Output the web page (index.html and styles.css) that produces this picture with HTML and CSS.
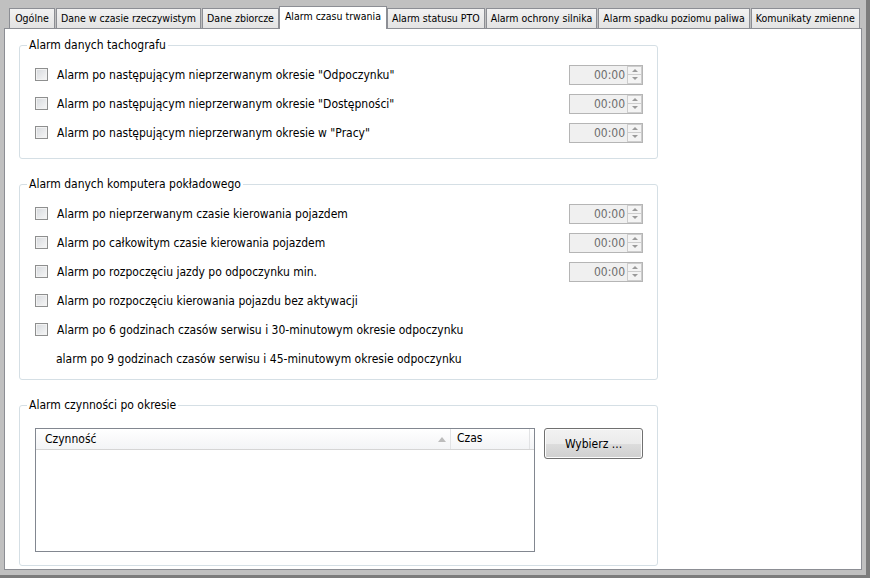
FILE: index.html
```
<!doctype html>
<html lang="pl">
  <head>
    <meta charset="UTF-8" />
    <title>Alarm czasu trwania</title>
    <link rel="stylesheet" href="styles.css">
  </head>
  <body>
    <div class="window">
      <div class="tabs">
        <div class="tab">Ogólne</div>
        <div class="tab">Dane w czasie rzeczywistym</div>
        <div class="tab">Dane zbiorcze</div>
        <div class="tab active">Alarm czasu trwania</div>
        <div class="tab">Alarm statusu PTO</div>
        <div class="tab">Alarm ochrony silnika</div>
        <div class="tab">Alarm spadku poziomu paliwa</div>
        <div class="tab">Komunikaty zmienne</div>
      </div>
      <div class="panel">
        <fieldset class="group">
          <legend>Alarm danych tachografu</legend>
          <div class="row">
            <span class="check"></span>
            <span class="label">Alarm po następującym nieprzerwanym okresie "Odpoczynku"</span>
            <div class="spin"><span class="spin-value">00:00</span><span class="spin-buttons"><i class="up"></i><i class="down"></i></span></div>
          </div>
          <div class="row">
            <span class="check"></span>
            <span class="label">Alarm po następującym nieprzerwanym okresie "Dostępności"</span>
            <div class="spin"><span class="spin-value">00:00</span><span class="spin-buttons"><i class="up"></i><i class="down"></i></span></div>
          </div>
          <div class="row">
            <span class="check"></span>
            <span class="label">Alarm po następującym nieprzerwanym okresie w "Pracy"</span>
            <div class="spin"><span class="spin-value">00:00</span><span class="spin-buttons"><i class="up"></i><i class="down"></i></span></div>
          </div>
        </fieldset>

        <fieldset class="group computer">
          <legend>Alarm danych komputera pokładowego</legend>
          <div class="row">
            <span class="check"></span>
            <span class="label">Alarm po nieprzerwanym czasie kierowania pojazdem</span>
            <div class="spin"><span class="spin-value">00:00</span><span class="spin-buttons"><i class="up"></i><i class="down"></i></span></div>
          </div>
          <div class="row">
            <span class="check"></span>
            <span class="label">Alarm po całkowitym czasie kierowania pojazdem</span>
            <div class="spin"><span class="spin-value">00:00</span><span class="spin-buttons"><i class="up"></i><i class="down"></i></span></div>
          </div>
          <div class="row">
            <span class="check"></span>
            <span class="label">Alarm po rozpoczęciu jazdy po odpoczynku min.</span>
            <div class="spin"><span class="spin-value">00:00</span><span class="spin-buttons"><i class="up"></i><i class="down"></i></span></div>
          </div>
          <div class="row">
            <span class="check"></span>
            <span class="label">Alarm po rozpoczęciu kierowania pojazdu bez aktywacji</span>
          </div>
          <div class="row">
            <span class="check"></span>
            <span class="label">Alarm po 6 godzinach czasów serwisu i 30-minutowym okresie odpoczynku</span>
          </div>
          <div class="row note">alarm po 9 godzinach czasów serwisu i 45-minutowym okresie odpoczynku</div>
        </fieldset>

        <fieldset class="group activity">
          <legend>Alarm czynności po okresie</legend>
          <div class="activity-body">
            <div class="list">
              <div class="list-head">
                <div class="col-name"><span>Czynność</span><i class="sort"></i></div>
                <div class="col-time">Czas</div>
              </div>
            </div>
            <button type="button" class="button">Wybierz ...</button>
          </div>
        </fieldset>
      </div>
    </div>
  </body>
</html>
```

FILE: styles.css
```
body {
  margin: 0;
  background-color: #c0c0c0;
  font-family: "DejaVu Sans Condensed", "Liberation Sans", sans-serif;
  font-size: 12px;
  color: #000;
}
.window {
  width: 870px;
  height: 578px;
  box-sizing: border-box;
  padding: 6px 4px 5px 4px;
  border-right: 4px solid #7c7c7c;
  border-bottom: 3px solid #7c7c7c;
  display: flex;
  flex-direction: column;
}
/* Tab strip */
.tabs {
  display: flex;
  align-items: flex-end;
  gap: 1px;
  height: 23px;
  padding-left: 5px;
  margin-bottom: -1px;
  position: relative;
  z-index: 1;
}
.tab {
  min-width: 46px;
  height: 21px;
  box-sizing: border-box;
  padding: 0 4px;
  line-height: 19px;
  font-size: 10.5px;
  text-align: center;
  border: 1px solid #8c8e94;
  background: linear-gradient(#f2f2f2, #e3e3e3);
  white-space: nowrap;
}
.tab.active {
  height: 23px;
  padding: 0 5px;
  margin: 0 -1px;
  line-height: 19px;
  border-bottom: none;
  background: #fff;
}
.panel {
  flex: 1;
  background-color: #fff;
  border: 1px solid #8c8e94;
  padding: 8px 0 0 14px;
}
/* Group boxes */
.group {
  width: 639px;
  box-sizing: border-box;
  margin: 0 0 17px 0;
  padding: 7px 14px 11px 15px;
  border: 1px solid #d5dfe5;
  border-radius: 3px;
  min-width: 0;
}
.group legend {
  margin-left: -8px;
  padding: 0 2px;
  line-height: 16px;
}
.group.computer {
  padding-bottom: 6px;
}
.group.activity {
  padding-top: 15px;
  padding-bottom: 13px;
  margin-bottom: 0;
}
.row {
  display: flex;
  align-items: center;
  height: 29px;
}
.row.note {
  padding-left: 21px;
}
.check {
  width: 13px;
  height: 13px;
  box-sizing: border-box;
  border: 1px solid #8e8f8f;
  background: linear-gradient(135deg, #d6d9dd, #f7f7f7);
  box-shadow: inset 0 0 0 1px #f2f2f2;
}
.label {
  flex: 1;
  margin-left: 9px;
}
/* Spin boxes (disabled) */
.spin {
  width: 74px;
  height: 20px;
  box-sizing: border-box;
  border: 1px solid #b5b5b5;
  background-color: #f0f0f0;
  display: flex;
}
.spin-value {
  flex: 1;
  text-align: right;
  padding-right: 2px;
  line-height: 18px;
  color: #6d6d6d;
}
.spin-buttons {
  width: 15px;
  display: flex;
  flex-direction: column;
}
.spin-buttons i {
  flex: 1;
  border: 1px solid #cdcdcd;
  background-color: #f4f4f4;
  display: flex;
  align-items: center;
  justify-content: center;
}
.spin-buttons i + i {
  border-top: none;
}
.spin-buttons i::after {
  content: "";
  border-left: 3px solid transparent;
  border-right: 3px solid transparent;
}
.spin-buttons .up::after {
  border-bottom: 3px solid #9a9a9a;
}
.spin-buttons .down::after {
  border-top: 3px solid #9a9a9a;
}
/* Activity list */
.activity-body {
  display: flex;
  align-items: flex-start;
}
.list {
  width: 500px;
  height: 124px;
  box-sizing: border-box;
  border: 1px solid #828790;
  background-color: #fff;
}
.list-head {
  display: flex;
  height: 20px;
  border-bottom: 1px solid #d5d5d5;
  background: linear-gradient(#fff, #f3f4f6);
}
.col-name {
  width: 415px;
  box-sizing: border-box;
  padding: 0 4px 0 9px;
  border-right: 1px solid #e2e3e5;
  display: flex;
  align-items: center;
  justify-content: space-between;
}
.sort {
  border-left: 4px solid transparent;
  border-right: 4px solid transparent;
  border-bottom: 5px solid #bcbcbc;
}
.col-time {
  width: 79px;
  box-sizing: border-box;
  padding: 0 0 3px 6px;
  border-right: 1px solid #e2e3e5;
  display: flex;
  align-items: center;
}
.button {
  width: 99px;
  height: 31px;
  margin-left: 9px;
  border: 1px solid #707070;
  border-radius: 3px;
  background: linear-gradient(#f2f2f2 0%, #ebebeb 50%, #dddddd 51%, #cfcfcf 100%);
  box-shadow: inset 0 0 0 1px #fcfcfc;
  font-family: inherit;
  font-size: 12px;
  color: #000;
}
```
